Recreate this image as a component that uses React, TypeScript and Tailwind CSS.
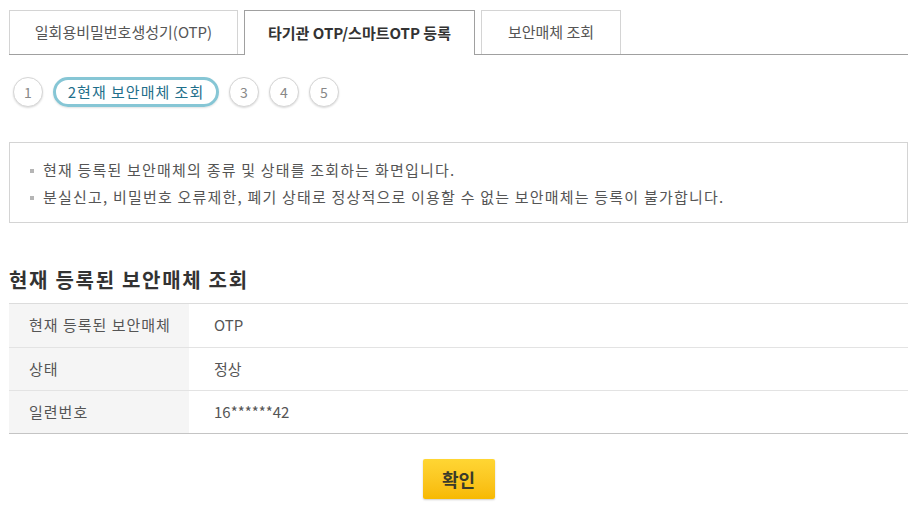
import React from 'react';

const font = { fontFamily: '"Noto Sans CJK KR", "Noto Sans", sans-serif' };

const tabs = [
  { label: '일회용비밀번호생성기(OTP)', w: 'w-[229px]' },
  { label: '타기관 OTP/스마트OTP 등록', w: 'w-[231px]', active: true },
  { label: '보안매체 조회', w: 'w-[140px]' },
];

const rows = [
  { k: '현재 등록된 보안매체', v: 'OTP' },
  { k: '상태', v: '정상' },
  { k: '일련번호', v: '16******42' },
];

const Circle: React.FC<{ n: number }> = ({ n }) => (
  <div className="w-[30px] h-[30px] rounded-full border border-[#d6d6d6] shadow-[0_1px_2px_rgba(0,0,0,0.15)] flex items-center justify-center text-[14px] text-[#888] bg-white">
    {n}
  </div>
);

const App: React.FC = () => {
  return (
    <div className="w-[918px] h-[525px] bg-white text-[#555]" style={font}>
      <div className="pl-[9px] pr-[10px] pt-[10px]">
        {/* tabs */}
        <div className="flex gap-[6px] border-b border-[#a0a0a0] h-[45px]">
          {tabs.map((t) => (
            <div
              key={t.label}
              className={
                t.active
                  ? `${t.w} h-[45px] border border-b-0 border-[#a0a0a0] bg-white flex items-center justify-center text-[15px] font-bold text-[#333] -mb-px`
                  : `${t.w} h-[44px] border border-b-0 border-[#d4d4d4] bg-white flex items-center justify-center text-[15px] text-[#555]`
              }
            >
              {t.label}
            </div>
          ))}
        </div>

        {/* steps */}
        <div className="flex items-center gap-[10px] mt-[22px] pl-[4px]">
          <Circle n={1} />
          <div className="w-[166px] h-[30px] rounded-full border-[3px] border-[#86c6d5] shadow-[0_1px_2px_rgba(0,0,0,0.12)] flex items-center justify-center text-[15px] tracking-[1px] text-[#1f6f8b]">
            2현재 보안매체 조회
          </div>
          <Circle n={3} />
          <Circle n={4} />
          <Circle n={5} />
        </div>

        {/* info box */}
        <div className="mt-[35px] h-[81px] border border-[#d4d4d4] pt-[14px] pl-[20px]">
          {[
            '현재 등록된 보안매체의 종류 및 상태를 조회하는 화면입니다.',
            '분실신고, 비밀번호 오류제한, 폐기 상태로 정상적으로 이용할 수 없는 보안매체는 등록이 불가합니다.',
          ].map((s) => (
            <div key={s} className="flex items-center h-[27px] text-[15px] tracking-[1.2px] text-[#555]">
              <span className="w-[4px] h-[4px] bg-[#b5b5b5] mr-[9px]" />
              {s}
            </div>
          ))}
        </div>

        {/* heading */}
        <h2 className="mt-[42px] h-[38px] text-[20px] font-bold tracking-[1.7px] text-[#333] leading-[30px]">
          현재 등록된 보안매체 조회
        </h2>

        {/* table */}
        <div className="border-t border-[#dcdcdc] border-b border-b-[#c4c4c4]">
          {rows.map((r, i) => (
            <div
              key={r.k}
              className={`flex h-[43px] ${i > 0 ? 'border-t border-[#e3e3e3]' : ''}`}
            >
              <div className="w-[180px] bg-[#f5f5f5] pl-[20px] flex items-center text-[15px] tracking-[1px] text-[#555]">
                {r.k}
              </div>
              <div className="pl-[25px] flex items-center text-[15px] text-[#555]">{r.v}</div>
            </div>
          ))}
        </div>

        {/* button */}
        <div className="flex justify-center mt-[25px]">
          <button className="w-[72px] h-[40px] rounded-[2px] bg-gradient-to-b from-[#ffd633] to-[#f7b900] shadow-[0_1px_2px_rgba(0,0,0,0.2)] text-[18px] font-bold text-[#3a3a2a]">
            확인
          </button>
        </div>
      </div>
    </div>
  );
};

export default App;
